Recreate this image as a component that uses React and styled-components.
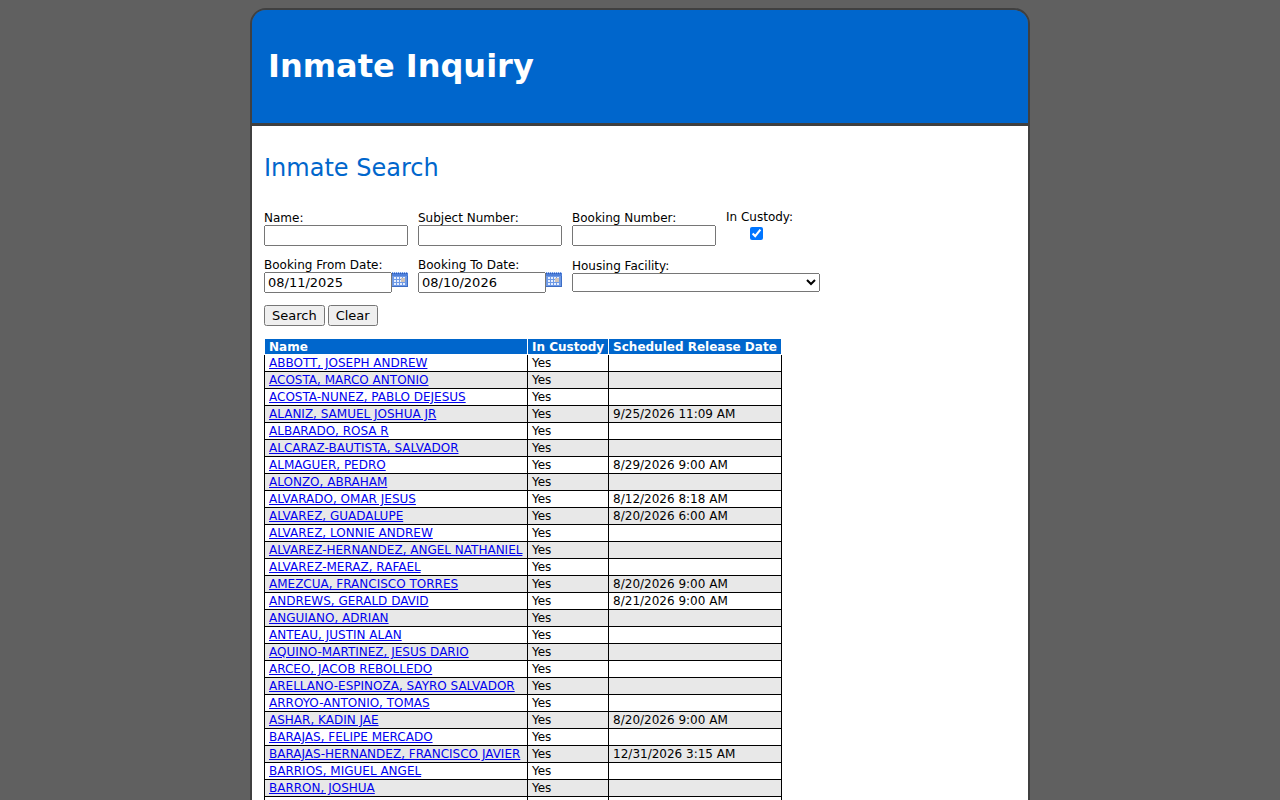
import React from "react";
import styled, { createGlobalStyle } from "styled-components";

const GlobalStyle = createGlobalStyle`
  body {
    margin: 0;
    padding: 8px;
    background: #606060;
    color: #000;
    font: 12px "DejaVu Sans", Verdana, sans-serif;
  }
  *, *::before, *::after { box-sizing: border-box; }
`;

const Page = styled.div`
  max-width: 780px;
  margin: 0 auto;
  border: 2px solid #404040;
  border-radius: 16px 16px 0 0;
`;

const Header = styled.header`
  padding: 36px 16px 37px;
  background: #0066cc;
  border-bottom: 3px solid #404040;
  border-radius: 14px 14px 0 0;
`;

const Title = styled.h1`
  margin: 0;
  color: #fff;
  font-size: 32px;
  line-height: 40px;
`;

const Main = styled.main`
  padding: 26px 12px 12px;
  background: #fff;
`;

const Heading = styled.h2`
  margin: 0 0 26px;
  color: #0066cc;
  font-size: 24px;
  font-weight: normal;
  line-height: 32px;
`;

const Form = styled.form`
  display: flex;
  flex-direction: column;
  gap: 11px;
  margin-bottom: 12px;
`;

const FormRow = styled.div`
  display: flex;
  flex-wrap: wrap;
  align-items: center;
  gap: 10px;
`;

const Field = styled.div`
  display: flex;
  flex-direction: column;
  width: ${(p) => p.$width || "144px"};
`;

const CheckField = styled(Field)`
  padding-bottom: 4px;
`;

const Label = styled.label`
  line-height: 14px;
  white-space: nowrap;
`;

const TextBox = styled.input`
  min-width: 0;
  width: 100%;
  height: 21px;
  font: 13px "DejaVu Sans", sans-serif;
`;

const DateLine = styled.div`
  display: flex;
  align-items: flex-start;
`;

const CalendarButton = styled.button`
  flex: none;
  width: 16px;
  height: 16px;
  padding: 0;
  border: 0;
  background: none;
  cursor: pointer;
  svg { display: block; }
`;

const Select = styled.select`
  height: 19px;
  width: 100%;
  font: 13px "DejaVu Sans", sans-serif;
`;

const Check = styled.input`
  width: 13px;
  height: 13px;
  margin: 3px 0 3px 24px;
`;

const Buttons = styled.div`
  display: flex;
  gap: 3px;
  padding-top: 1px;
`;

const Button = styled.button`
  height: 21px;
  padding: 1px 6px;
  font: 13px "DejaVu Sans", sans-serif;
`;

const Table = styled.table`
  border-collapse: collapse;
  white-space: nowrap;
`;

const HeadCell = styled.th`
  width: ${(p) => p.$width || "auto"};
  padding: 1px 4px 0;
  background: #0066cc;
  border: 1px solid #fff;
  color: #fff;
  line-height: 14px;
  text-align: left;
`;

const Row = styled.tr`
  height: 17px;
  &:nth-child(even) { background: #e8e8e8; }
`;

const Cell = styled.td`
  padding: 0 4px;
  border: 1px solid #000;
  line-height: 16px;
`;

const NameLink = styled.a`
  color: #0000ee;
`;

function CalendarIcon() {
  return (
    <svg width="16" height="16" viewBox="0 0 16 16" aria-hidden="true" shapeRendering="crispEdges">
      <rect width="16" height="15" fill="#6f9ae6" />
      <path d="M0 1h16v3H0z" fill="#4f80da" />
      <path d="M1 0h1v1H1zM3 0h1v1H3zM5 0h1v1H5zM7 0h1v1H7zM9 0h1v1H9zM11 0h1v1h-1zM13 0h1v1h-1zM15 0h1v1h-1z" fill="#dce7fb" />
      <path d="M0 1h1v1H0zM2 1h1v1H2zM4 1h1v1H4zM6 1h1v1H6zM8 1h1v1H8zM10 1h1v1h-1zM12 1h1v1h-1zM14 1h1v1h-1z" fill="#2f5fbd" />
      <path d="M2 5h2v2H2zM5 5h2v2H5zM8 5h2v2H8zM11 5h2v2h-2zM2 8h2v2H2zM5 8h2v2H5zM8 8h2v2H8zM11 8h2v2h-2zM2 11h2v2H2zM5 11h2v2H5zM8 11h2v2H8zM11 11h2v2h-2z" fill="#e6efff" />
      <path d="M9 6h4v4H9z" fill="#cfc3b8" />
      <path d="M0 14h16v1H0zM15 4h1v10h-1z" fill="#3d6dc4" />
    </svg>
  );
}

function TextField({ id, label }) {
  return (
    <Field>
      <Label htmlFor={id}>{label}</Label>
      <TextBox id={id} type="text" />
    </Field>
  );
}

function DateField({ id, label, value }) {
  return (
    <Field>
      <Label htmlFor={id}>{label}</Label>
      <DateLine>
        <TextBox id={id} type="text" defaultValue={value} />
        <CalendarButton type="button"><CalendarIcon /></CalendarButton>
      </DateLine>
    </Field>
  );
}

const inmates = [
  ["ABBOTT, JOSEPH ANDREW"],
  ["ACOSTA, MARCO ANTONIO"],
  ["ACOSTA-NUNEZ, PABLO DEJESUS"],
  ["ALANIZ, SAMUEL JOSHUA JR", "9/25/2026 11:09 AM"],
  ["ALBARADO, ROSA R"],
  ["ALCARAZ-BAUTISTA, SALVADOR"],
  ["ALMAGUER, PEDRO", "8/29/2026 9:00 AM"],
  ["ALONZO, ABRAHAM"],
  ["ALVARADO, OMAR JESUS", "8/12/2026 8:18 AM"],
  ["ALVAREZ, GUADALUPE", "8/20/2026 6:00 AM"],
  ["ALVAREZ, LONNIE ANDREW"],
  ["ALVAREZ-HERNANDEZ, ANGEL NATHANIEL"],
  ["ALVAREZ-MERAZ, RAFAEL"],
  ["AMEZCUA, FRANCISCO TORRES", "8/20/2026 9:00 AM"],
  ["ANDREWS, GERALD DAVID", "8/21/2026 9:00 AM"],
  ["ANGUIANO, ADRIAN"],
  ["ANTEAU, JUSTIN ALAN"],
  ["AQUINO-MARTINEZ, JESUS DARIO"],
  ["ARCEO, JACOB REBOLLEDO"],
  ["ARELLANO-ESPINOZA, SAYRO SALVADOR"],
  ["ARROYO-ANTONIO, TOMAS"],
  ["ASHAR, KADIN JAE", "8/20/2026 9:00 AM"],
  ["BARAJAS, FELIPE MERCADO"],
  ["BARAJAS-HERNANDEZ, FRANCISCO JAVIER", "12/31/2026 3:15 AM"],
  ["BARRIOS, MIGUEL ANGEL"],
  ["BARRON, JOSHUA"],
];

export default function App() {
  return (
    <>
      <GlobalStyle />
      <Page>
        <Header>
          <Title>Inmate Inquiry</Title>
        </Header>
        <Main>
          <Heading>Inmate Search</Heading>
          <Form onSubmit={(e) => e.preventDefault()}>
            <FormRow>
              <TextField id="name" label="Name:" />
              <TextField id="subject" label="Subject Number:" />
              <TextField id="booking" label="Booking Number:" />
              <CheckField $width="auto">
                <Label htmlFor="custody">In Custody:</Label>
                <Check id="custody" type="checkbox" defaultChecked />
              </CheckField>
            </FormRow>
            <FormRow>
              <DateField id="from" label="Booking From Date:" value="08/11/2025" />
              <DateField id="to" label="Booking To Date:" value="08/10/2026" />
              <Field $width="248px">
                <Label htmlFor="facility">Housing Facility:</Label>
                <Select id="facility"><option></option></Select>
              </Field>
            </FormRow>
            <Buttons>
              <Button type="submit">Search</Button>
              <Button type="reset">Clear</Button>
            </Buttons>
          </Form>
          <Table>
            <thead>
              <tr>
                <HeadCell $width="263px">Name</HeadCell>
                <HeadCell>In Custody</HeadCell>
                <HeadCell>Scheduled Release Date</HeadCell>
              </tr>
            </thead>
            <tbody>
              {inmates.map(([name, release]) => (
                <Row key={name}>
                  <Cell><NameLink href="#">{name}</NameLink></Cell>
                  <Cell>Yes</Cell>
                  <Cell>{release}</Cell>
                </Row>
              ))}
              <Row>
                <Cell />
                <Cell />
                <Cell />
              </Row>
            </tbody>
          </Table>
        </Main>
      </Page>
    </>
  );
}
